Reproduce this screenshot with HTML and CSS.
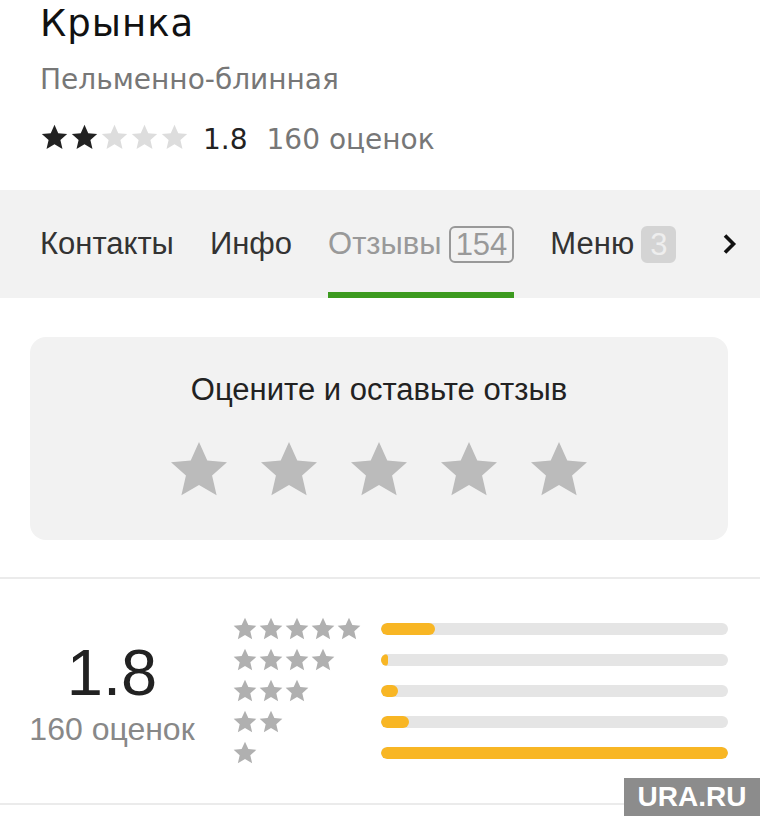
FILE: index.html
```html
<!DOCTYPE html>
<html lang="ru">
<head>
    <meta charset="utf-8">
    <title>Крынка</title>
    <link rel="stylesheet" href="styles.css">
</head>
<body>
    <svg class="defs" width="0" height="0">
        <symbol id="star" viewBox="0 0 24 24">
            <path d="M12 1.5l3.1 6.9 7.4.7-5.6 5 1.7 7.4L12 17.6l-6.6 3.9 1.7-7.4-5.6-5 7.4-.7z"/>
        </symbol>
    </svg>

    <div class="header">
        <h1 class="title">Крынка</h1>
        <div class="category">Пельменно-блинная</div>
        <div class="summary">
            <span class="mini-stars">
                <svg class="on"><use href="#star"/></svg>
                <svg class="on"><use href="#star"/></svg>
                <svg><use href="#star"/></svg>
                <svg><use href="#star"/></svg>
                <svg><use href="#star"/></svg>
            </span>
            <span class="score">1.8</span>
            <span class="count">160 оценок</span>
        </div>
    </div>

    <div class="tabs">
        <div class="tab">Контакты</div>
        <div class="tab">Инфо</div>
        <div class="tab active">Отзывы <span class="badge">154</span></div>
        <div class="tab">Меню <span class="badge filled">3</span></div>
        <div class="tab arrow">
            <svg width="16" height="22" viewBox="0 0 16 22"><path d="M3 2.5l8.5 8.5-8.5 8.5" fill="none" stroke="#111" stroke-width="3.6"/></svg>
        </div>
    </div>

    <div class="rate-card">
        <div class="rate-title">Оцените и оставьте отзыв</div>
        <div class="rate-stars">
            <svg><use href="#star"/></svg>
            <svg><use href="#star"/></svg>
            <svg><use href="#star"/></svg>
            <svg><use href="#star"/></svg>
            <svg><use href="#star"/></svg>
        </div>
    </div>

    <div class="stats">
        <div class="total">
            <div class="total-score">1.8</div>
            <div class="total-count">160 оценок</div>
        </div>
        <div class="rows">
            <div class="row">
                <span class="row-stars"><svg><use href="#star"/></svg><svg><use href="#star"/></svg><svg><use href="#star"/></svg><svg><use href="#star"/></svg><svg><use href="#star"/></svg></span>
                <span class="bar"><span class="fill" style="width: 15.5%"></span></span>
            </div>
            <div class="row">
                <span class="row-stars"><svg><use href="#star"/></svg><svg><use href="#star"/></svg><svg><use href="#star"/></svg><svg><use href="#star"/></svg></span>
                <span class="bar"><span class="fill" style="width: 2%"></span></span>
            </div>
            <div class="row">
                <span class="row-stars"><svg><use href="#star"/></svg><svg><use href="#star"/></svg><svg><use href="#star"/></svg></span>
                <span class="bar"><span class="fill" style="width: 5%"></span></span>
            </div>
            <div class="row">
                <span class="row-stars"><svg><use href="#star"/></svg><svg><use href="#star"/></svg></span>
                <span class="bar"><span class="fill" style="width: 8%"></span></span>
            </div>
            <div class="row">
                <span class="row-stars"><svg><use href="#star"/></svg></span>
                <span class="bar"><span class="fill" style="width: 100%"></span></span>
            </div>
        </div>
    </div>

    <div class="watermark">URA.RU</div>
</body>
</html>
```

FILE: styles.css
```css
html, body {
    margin: 0;
    padding: 0;
    background: #fff;
    overflow: hidden;
}
body {
    font-family: "Liberation Sans", Arial, sans-serif;
    color: #222;
    position: relative;
    height: 816px;
}
.defs {
    position: absolute;
}
.header {
    padding: 0 40px;
    height: 190px;
    font-family: "DejaVu Sans", Verdana, sans-serif;
}
.title {
    margin: 0;
    font-size: 37px;
    font-weight: normal;
    line-height: 48px;
    letter-spacing: 1px;
    color: #111;
}
.category {
    margin-top: 15px;
    font-size: 28px;
    line-height: 34px;
    color: #777;
}
.summary {
    margin-top: 26px;
    display: flex;
    align-items: center;
    font-size: 28px;
    line-height: 34px;
}
.mini-stars {
    display: flex;
    gap: 1px;
    margin-right: 14px;
    margin-top: -6px;
}
.mini-stars svg {
    width: 29px;
    height: 29px;
    fill: #ddd;
}
.mini-stars svg.on {
    fill: #222;
}
.score {
    color: #222;
    margin-right: 19px;
}
.count {
    color: #777;
}
.tabs {
    background: #f2f2f2;
    height: 108px;
    display: flex;
    gap: 36px;
    padding: 0 40px;
    font-size: 31px;
}
.tab {
    display: flex;
    align-items: center;
    gap: 7px;
    box-sizing: border-box;
    height: 108px;
    padding-top: 6px;
    border-bottom: 6px solid transparent;
    color: #333;
}
.tab.active {
    color: #999;
    border-bottom-color: #3c9a1f;
}
.badge {
    display: inline-block;
    border: 2px solid #999;
    border-radius: 6px;
    padding: 0 5px;
    line-height: 33px;
    color: #999;
}
.badge.filled {
    background: #d4d4d4;
    border-color: #d4d4d4;
    color: #eee;
    padding: 0 7px;
}
.tab.arrow {
    margin-left: 10px;
}
.rate-card {
    margin: 39px 32px 0 30px;
    height: 203px;
    background: #f2f2f2;
    border-radius: 16px;
    display: flex;
    flex-direction: column;
    align-items: center;
}
.rate-title {
    margin-top: 35px;
    font-size: 31px;
    line-height: 36px;
    color: #222;
}
.rate-stars {
    margin-top: 30px;
    display: flex;
    gap: 26px;
}
.rate-stars svg {
    width: 64px;
    height: 64px;
    fill: #bbb;
}
.stats {
    margin-top: 37px;
    border-top: 2px solid #ebebeb;
    border-bottom: 2px solid #ebebeb;
    height: 224px;
    display: flex;
    align-items: center;
}
.total {
    width: 224px;
    text-align: center;
}
.total-score {
    font-size: 65px;
    line-height: 76px;
    color: #222;
}
.total-count {
    font-size: 32px;
    line-height: 36px;
    color: #888;
}
.rows {
    display: flex;
    flex-direction: column;
    width: 496px;
    margin-left: 8px;
}
.row {
    display: flex;
    align-items: center;
    height: 31px;
}
.row-stars {
    width: 149px;
    display: flex;
}
.row-stars svg {
    width: 26px;
    height: 26px;
    fill: #b0b0b0;
}
.bar {
    flex: 1;
    height: 12px;
    border-radius: 6px;
    background: #e5e5e5;
    overflow: hidden;
}
.fill {
    display: block;
    height: 100%;
    border-radius: 6px;
    background: #f8b624;
}
.watermark {
    position: absolute;
    right: 0;
    bottom: 0;
    width: 136px;
    height: 38px;
    background: #8c8c8c;
    color: #fff;
    font-weight: bold;
    font-size: 28px;
    line-height: 38px;
    text-align: center;
}
```
